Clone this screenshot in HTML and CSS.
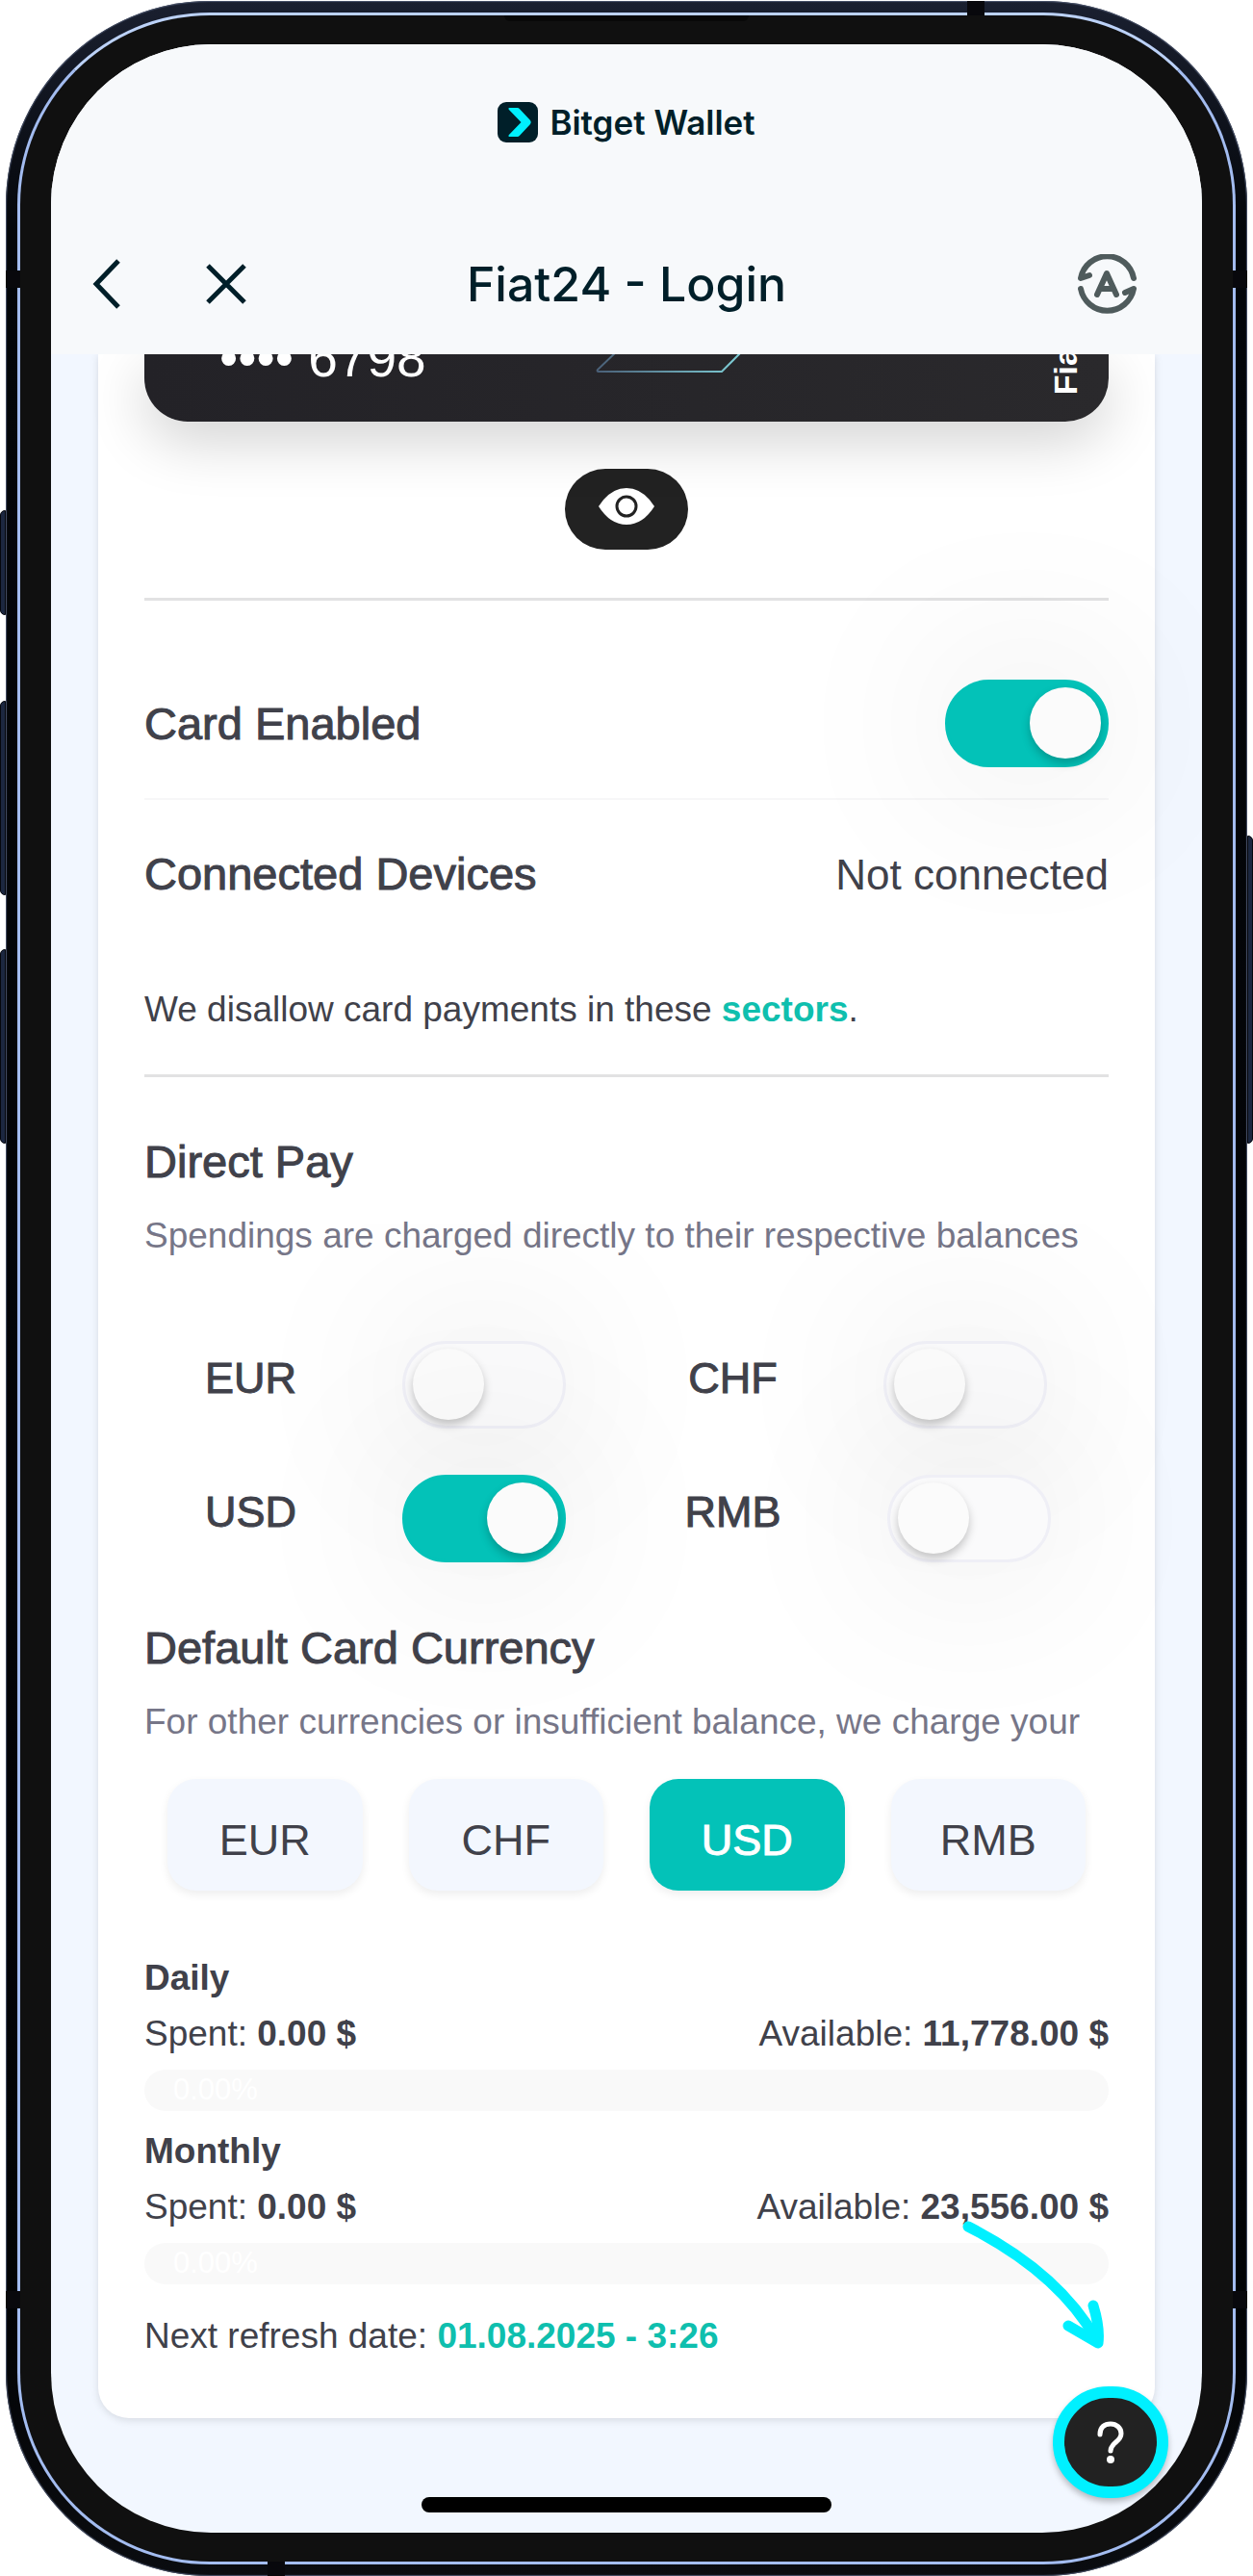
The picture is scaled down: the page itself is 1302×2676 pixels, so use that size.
FILE: index.html
```
<!DOCTYPE html>
<html lang="en">
<head>
  <meta charset="UTF-8" />
  <meta name="viewport" content="width=device-width, initial-scale=1.0"/>
  <title>Fiat24 - Login</title>
  <link rel="stylesheet" href="styles.css">
</head>
<body>

  <div class="phone">
    <!-- Side buttons and antenna bands -->
    <span class="side-btn left action"></span>
    <span class="side-btn left vol-up"></span>
    <span class="side-btn left vol-down"></span>
    <span class="side-btn right power"></span>
    <span class="band band-h top"></span>
    <span class="band band-h bottom"></span>
    <span class="band band-v left upper"></span>
    <span class="band band-v right upper"></span>
    <span class="band band-v left lower"></span>
    <span class="band band-v right lower"></span>

    <div class="bezel">
      <span class="speaker"></span>
      <div class="screen">

        <header class="header">
          <div class="brand">
            <svg width="42" height="42" viewBox="0 0 42 42">
              <rect width="42" height="42" rx="9" fill="#001f29"/>
              <path d="M12 6h8.500q1.500 0 2.500 1.200l11 11.800q1.500 2 0 4l-11 11.800q-1 1.200-2.500 1.200H12q-1.200-.5-.3-1.700L24.500 21 11.700 7.700Q10.800 6.500 12 6z" fill="#00f0ff"/>
            </svg>
            <span>Bitget Wallet</span>
          </div>
          <nav class="nav">
            <div class="nav-left">
              <button class="icon-btn" aria-label="Back">
                <svg width="32" height="56" viewBox="0 0 32 56"><path d="M30 4L7 28l23 24"/></svg>
              </button>
              <button class="icon-btn" aria-label="Close">
                <svg width="44" height="44" viewBox="0 0 44 44"><path d="M3 3l38 38M41 3L3 41"/></svg>
              </button>
            </div>
            <h1>Fiat24 - Login</h1>
            <button class="icon-btn refresh" aria-label="Translate">
              <svg width="62" height="62" viewBox="0 0 62 62">
                <path d="M59 25A28 28 0 0 0 4 25l9-3"/>
                <path d="M4 36a28 28 0 0 0 55 0l-9 4"/>
                <path d="M21 42l10-22 10 22M25 36h12"/>
              </svg>
            </button>
          </nav>
        </header>

        <main class="card">
          <div class="bank-card">
            <span class="number">•••• 6798</span>
            <svg class="chip-line" width="156" height="22" viewBox="0 0 156 22">
              <defs>
                <linearGradient id="edge">
                  <stop offset="0" stop-color="#4a6078"/>
                  <stop offset="1" stop-color="#7fd0d8"/>
                </linearGradient>
              </defs>
              <path d="M24-4L3 16q-1 2 1 2h128L154-4" fill="none" stroke="url(#edge)" stroke-width="2"/>
            </svg>
            <span class="holder">Fiat24</span>
          </div>

          <button class="eye-btn" aria-label="Show card details">
            <svg width="58" height="38" viewBox="0 0 58 38">
              <path d="M0 19Q12 0 29 0t29 19Q46 38 29 38T0 19z" fill="#fff"/>
              <circle cx="29" cy="19" r="10" fill="none" stroke="#222" stroke-width="3"/>
            </svg>
          </button>

          <hr>

          <div class="row enabled">
            <label class="title" for="cardEnabled">Card Enabled</label>
            <input type="checkbox" class="toggle" id="cardEnabled" checked />
          </div>
          <div class="row devices">
            <span class="title">Connected Devices</span>
            <span class="value">Not connected</span>
          </div>
          <p class="text sectors">We disallow card payments in these <a href="#">sectors</a>.</p>

          <hr>

          <h2 class="title direct">Direct Pay</h2>
          <p class="text hint">Spendings are charged directly to their respective balances</p>
          <div class="pay-grid">
            <div class="pay">
              <label class="title" for="payEur">EUR</label>
              <input type="checkbox" class="toggle" id="payEur" />
            </div>
            <div class="pay">
              <label class="title" for="payChf">CHF</label>
              <input type="checkbox" class="toggle" id="payChf" />
            </div>
            <div class="pay">
              <label class="title" for="payUsd">USD</label>
              <input type="checkbox" class="toggle" id="payUsd" checked />
            </div>
            <div class="pay">
              <label class="title" for="payRmb">RMB</label>
              <input type="checkbox" class="toggle" id="payRmb" />
            </div>
          </div>

          <h2 class="title default">Default Card Currency</h2>
          <p class="text hint">For other currencies or insufficient balance, we charge your</p>
          <div class="currencies">
            <button>EUR</button>
            <button>CHF</button>
            <button class="active">USD</button>
            <button>RMB</button>
          </div>

          <section class="limit">
            <h3 class="text">Daily</h3>
            <div class="row text">
              <span>Spent: <b>0.00 $</b></span>
              <span>Available: <b>11,778.00 $</b></span>
            </div>
            <div class="progress">0.00%</div>
          </section>
          <section class="limit">
            <h3 class="text">Monthly</h3>
            <div class="row text">
              <span>Spent: <b>0.00 $</b></span>
              <span>Available: <b>23,556.00 $</b></span>
            </div>
            <div class="progress">0.00%</div>
          </section>
          <p class="text refresh-date">Next refresh date: <b>01.08.2025 - 3:26</b></p>
        </main>

        <div class="home-bar"></div>

        <!-- Help button with the arrow pointing at it -->
        <svg class="arrow" width="150" height="136" viewBox="0 0 150 136">
          <path d="M8 8Q102 56 141 125"/>
          <path d="M112 111l31 18q2-16-5-39"/>
        </svg>
        <button class="help" aria-label="Help">
          <svg width="30" height="44" viewBox="0 0 30 44">
            <path d="M4 14C4 6 9 3 15 3s11 4 11 10c0 9-11 9-11 18" fill="none" stroke="#fff" stroke-width="5" stroke-linecap="round"/>
            <circle cx="15" cy="40" r="4" fill="#fff"/>
          </svg>
        </button>
      </div>
    </div>
  </div>

</body>
</html>
```
FILE: styles.css
```
* {
  box-sizing: border-box;
}

body {
  margin: 0;
  background: #fff;
  color: #40414a;
  font-family: "Liberation Sans", Arial, sans-serif;
}

h1, h2, h3, p {
  margin: 0;
}

button {
  border: none;
  padding: 0;
  font-family: inherit;
  color: inherit;
  cursor: pointer;
}

svg {
  display: block;
}

/* Phone frame */
.phone {
  position: relative;
  margin: 1px 6px 2px;
  padding: 12px;
  border-radius: 212px;
  background: linear-gradient(#1a2030 0, #04060a 240px, #020305 2400px, #0a0c10 100%);
  box-shadow: inset 0 0 1px 1px #4a546c;
}

.bezel {
  position: relative;
  padding: 30px 32px;
  border: 3px solid #a3bcf0;
  border-top-color: #bcd2f8;
  border-radius: 200px;
  background: #101010;
}

.screen {
  position: relative;
  overflow: hidden;
  border-radius: 166px;
  background: #f2f7ff;
}

.side-btn {
  position: absolute;
  width: 6px;
  background: #1c2740;
  border: 1px solid #05070c;
}

.side-btn.left {
  left: -6px;
  border-radius: 5px 0 0 5px;
}

.side-btn.right {
  right: -6px;
  border-radius: 0 5px 5px 0;
}

.action { top: 529px; height: 109px; }
.vol-up { top: 727px; height: 202px; }
.vol-down { top: 985px; height: 202px; }
.power { top: 867px; height: 320px; }

.band {
  position: absolute;
  z-index: 1;
  background: #08080c;
}

.band-h {
  width: 18px;
  height: 15px;
}

.band-v {
  width: 15px;
  height: 18px;
}

.band-h.top { top: 0; right: 273px; }
.band-h.bottom { bottom: 0; left: 272px; }
.band-v.left { left: 0; }
.band-v.right { right: 0; }
.band-v.upper { top: 280px; }
.band-v.lower { bottom: 278px; }

.speaker {
  position: absolute;
  top: 0;
  left: 50%;
  width: 254px;
  height: 6px;
  margin-left: -127px;
  border-radius: 0 0 6px 6px;
  background: #080808;
}

/* Top bar */
.header {
  position: relative;
  z-index: 1;
  padding: 60px 40px 42px;
  background: #f7f9fb;
  color: #001f29;
}

.brand {
  display: flex;
  justify-content: center;
  align-items: center;
  gap: 12px;
  font: 600 35px/42px Inter, sans-serif;
}

.nav {
  display: grid;
  grid-template-columns: 1fr auto 1fr;
  align-items: center;
  margin-top: 116px;
}

.nav h1 {
  font: 500 50px/60px Inter, sans-serif;
  font-optical-sizing: none;
}

.nav-left {
  display: flex;
  align-items: center;
  gap: 88px;
}

.icon-btn {
  background: none;
}

.icon-btn path {
  fill: none;
  stroke: #001f29;
  stroke-width: 5;
}

.refresh {
  justify-self: end;
  margin-right: 28px;
}

.refresh path {
  stroke: #4f5b5c;
  stroke-width: 6;
  stroke-linecap: round;
  stroke-linejoin: round;
}

/* Content card */
.card {
  margin: 0 49px;
  padding: 0 48px 63px;
  border-radius: 0 0 32px 32px;
  background: #fff;
  box-shadow: 0 2px 8px rgba(0, 0, 0, 0.12);
}

.bank-card {
  position: relative;
  display: flex;
  justify-content: space-between;
  align-items: flex-end;
  height: 70px;
  padding: 0 28px 28px 78px;
  border-radius: 0 0 45px 45px;
  background: linear-gradient(to right, #232227, #2a292c);
  box-shadow: 0 20px 60px rgba(0, 0, 0, 0.18);
  color: #fff;
}

.number {
  margin-bottom: 11px;
  font-size: 55px;
  line-height: 54px;
}

.chip-line {
  position: absolute;
  top: 0;
  left: 468px;
}

.holder {
  writing-mode: vertical-rl;
  transform: rotate(180deg);
  font-size: 34px;
  line-height: 34px;
  font-weight: bold;
}

.eye-btn {
  display: flex;
  justify-content: center;
  width: 128px;
  height: 84px;
  margin: 49px auto 50px;
  padding-top: 20px;
  border-radius: 42px;
  background: #222;
}

hr {
  height: 3px;
  margin: 0;
  border: none;
  background: #e2e2e3;
}

.row {
  display: flex;
  justify-content: space-between;
  align-items: center;
}

.title {
  font-size: 47px;
  line-height: 58px;
  font-weight: normal;
  -webkit-text-stroke: 1px #40414a;
}

.text {
  font-size: 37px;
  line-height: 44px;
}

.enabled {
  padding: 82px 0 32px;
  border-bottom: 2px solid #f7f7f8;
}

.devices {
  align-items: baseline;
  margin-top: 48px;
}

.value {
  font-size: 44px;
}

.sectors {
  margin: 90px 0 45px;
}

.sectors a,
.refresh-date b {
  color: #0fbfae;
  font-weight: bold;
  text-decoration: none;
}

.direct {
  margin-top: 59px;
}

.hint {
  margin-top: 26px;
  color: #767688;
}

/* Switches */
.toggle {
  appearance: none;
  flex: none;
  width: 170px;
  height: 91px;
  margin: 0;
  padding: 5px 8px;
  border: 3px solid #efeff6;
  border-radius: 46px;
  background: #fafafb;
  box-shadow: 0 0 190px rgba(0, 0, 0, 0.13);
  cursor: pointer;
}

.toggle::before {
  content: "";
  display: block;
  width: 74px;
  height: 74px;
  border-radius: 50%;
  background: #fbfbfb;
  box-shadow: 0 5px 10px rgba(0, 0, 0, 0.22);
}

.toggle:checked {
  border-color: #03c2b8;
  background: #03c2b8;
  padding: 5px;
}

.toggle:checked::before {
  margin-left: auto;
}

.pay-grid {
  display: grid;
  grid-template-columns: 1fr 1fr;
  row-gap: 48px;
  margin-top: 87px;
}

.pay {
  display: flex;
  justify-content: center;
  align-items: flex-start;
  gap: 110px;
}

.pay .title {
  margin-top: 10px;
  font-size: 45px;
}

.default {
  margin-top: 60px;
}

.currencies {
  display: grid;
  grid-template-columns: repeat(4, 1fr);
  margin-top: 37px;
}

.currencies button {
  height: 116px;
  margin: 0 24px;
  padding-top: 12px;
  border-radius: 30px;
  background: #f3f7fe;
  box-shadow: 0 4px 10px rgba(0, 0, 0, 0.07);
  font-size: 45px;
}

.currencies .active {
  background: #03c2b8;
  color: #fff;
  -webkit-text-stroke: 1px #fff;
}

/* Spending limits */
.limit {
  margin-top: 20px;
}

.currencies + .limit {
  margin-top: 69px;
}

.limit .row {
  margin-top: 14px;
}

.progress {
  height: 43px;
  margin-top: 15px;
  padding-left: 30px;
  border-radius: 22px;
  background: #f9f9f9;
  color: #fff;
  font-size: 31px;
  line-height: 41px;
}

.refresh-date {
  margin-top: 32px;
}

.home-bar {
  width: 426px;
  height: 16px;
  margin: 82px auto 21px;
  border-radius: 8px;
  background: #000;
}

.arrow {
  position: absolute;
  right: 101px;
  bottom: 190px;
  fill: none;
  stroke: #00f0ff;
  stroke-width: 11;
  stroke-linecap: round;
  stroke-linejoin: round;
}

.help {
  position: absolute;
  right: 35px;
  bottom: 36px;
  display: flex;
  justify-content: center;
  align-items: center;
  width: 120px;
  height: 116px;
  border: 12px solid #00f0ff;
  border-radius: 60px;
  background: #222;
  box-shadow: 0 4px 6px rgba(0, 0, 0, 0.25);
}
```
